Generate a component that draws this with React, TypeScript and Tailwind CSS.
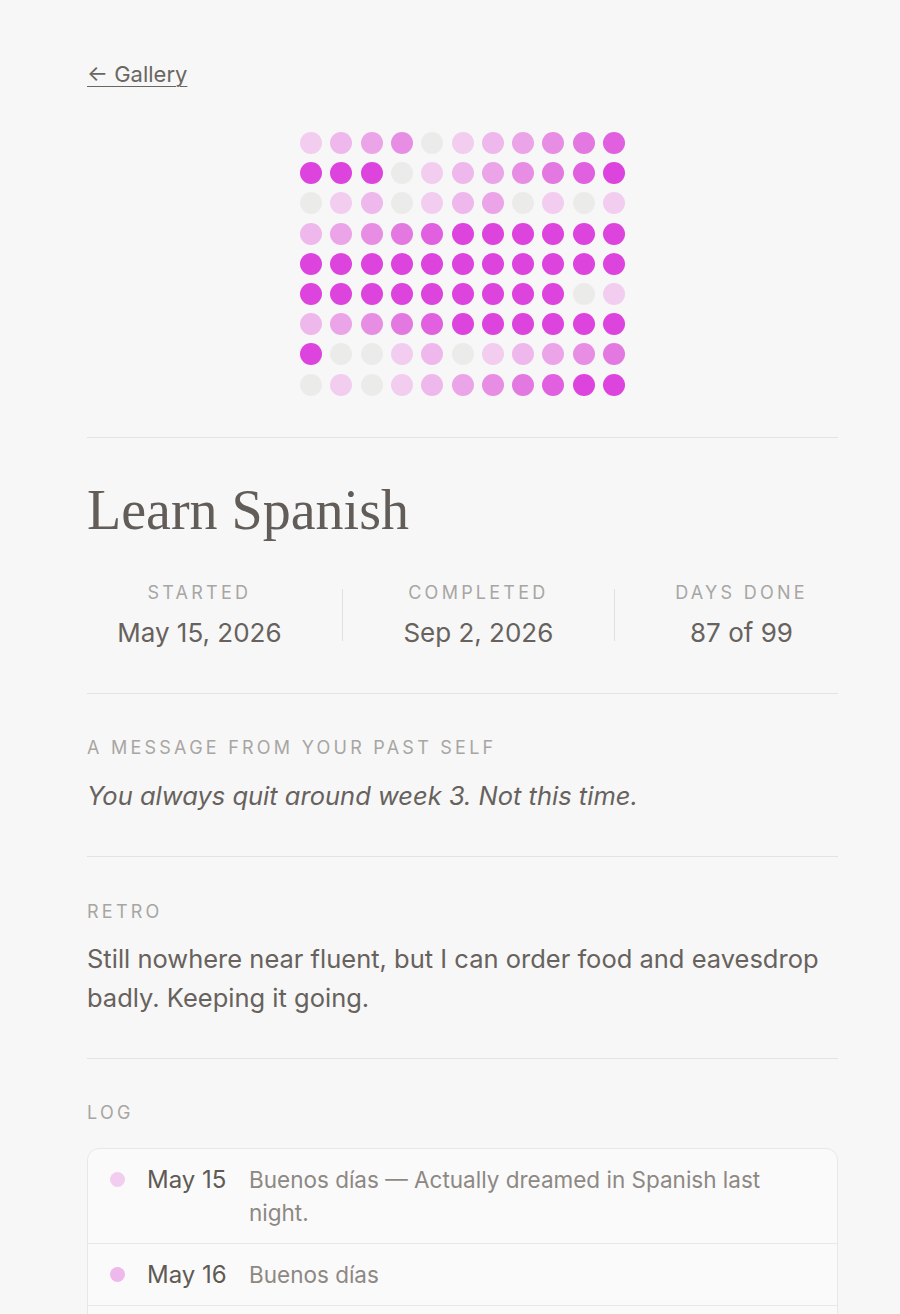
import React from "react"

// 0 = missed day, 1..7 = streak intensity
const GRID: number[][] = [
  [1, 2, 3, 4, 0, 1, 2, 3, 4, 5, 6],
  [7, 7, 7, 0, 1, 2, 3, 4, 5, 6, 7],
  [0, 1, 2, 0, 1, 2, 3, 0, 1, 0, 1],
  [2, 3, 4, 5, 6, 7, 7, 7, 7, 7, 7],
  [7, 7, 7, 7, 7, 7, 7, 7, 7, 7, 7],
  [7, 7, 7, 7, 7, 7, 7, 7, 7, 0, 1],
  [2, 3, 4, 5, 6, 7, 7, 7, 7, 7, 7],
  [7, 0, 0, 1, 2, 0, 1, 2, 3, 4, 5],
  [0, 1, 0, 1, 2, 3, 4, 5, 6, 7, 7],
]

const LEVEL_BG: Record<number, string> = {
  0: "bg-[#ebebe9]",
  1: "bg-[#f2cdf0]",
  2: "bg-[#efb8ec]",
  3: "bg-[#eba4e8]",
  4: "bg-[#e78ee4]",
  5: "bg-[#e378e1]",
  6: "bg-[#e060df]",
  7: "bg-[#dd44dd]",
}

const LOG = [
  { date: "May 15", text: "Buenos días — Actually dreamed in Spanish last night.", dot: "bg-[#f2cdf0]" },
  { date: "May 16", text: "Buenos días", dot: "bg-[#efb8ec]" },
  { date: "May 17", text: "Buenos días", dot: "bg-[#eba4e8]" },
]

const sans = "font-['Inter','Liberation_Sans',sans-serif]"

function Label({ children }: { children: React.ReactNode }) {
  return (
    <div className="text-[18px] leading-[22px] tracking-[0.18em] uppercase text-[#a8a6a3]">
      {children}
    </div>
  )
}

function Stat({ label, value }: { label: string; value: string }) {
  return (
    <div className="flex flex-col items-center">
      <Label>{label}</Label>
      <div className="mt-[13px] text-[26px] leading-[32px] text-[#67625d]">{value}</div>
    </div>
  )
}

export default function App() {
  return (
    <div className={`min-h-screen bg-[#f7f7f7] ${sans}`}>
      <div className="ml-[87px] w-[751px] pt-[60px] pb-10">
        <a href="#" className="text-[22px] leading-[28px] text-[#6b6661] underline underline-offset-4 decoration-1">
          ← Gallery
        </a>

        {/* progress grid */}
        <div className="mt-[44px] flex justify-center">
          <div className="grid grid-cols-11 gap-x-[8.3px] gap-y-[8.2px]">
            {GRID.flat().map((lvl, i) => (
              <div key={i} className={`h-[22px] w-[22px] rounded-full ${LEVEL_BG[lvl]}`} />
            ))}
          </div>
        </div>

        <hr className="mt-[41px] border-t border-[#e3e3e1]" />

        <h1 className="mt-[40px] font-['Liberation_Serif','DejaVu_Serif',serif] text-[56px] leading-[64px] text-[#625d58]">
          Learn Spanish
        </h1>

        <div className="mt-[40px] flex items-center justify-around">
          <Stat label="Started" value="May 15, 2026" />
          <div className="h-[52px] w-px bg-[#e3e1de]" />
          <Stat label="Completed" value="Sep 2, 2026" />
          <div className="h-[52px] w-px bg-[#e3e1de]" />
          <Stat label="Days done" value="87 of 99" />
        </div>

        <hr className="mt-[44px] border-t border-[#e3e3e1]" />

        <div className="mt-[43px]">
          <Label>A message from your past self</Label>
          <p className="mt-[20px] text-[25.5px] leading-[34px] italic text-[#67625d]">
            You always quit around week 3. Not this time.
          </p>
        </div>

        <hr className="mt-[43px] border-t border-[#e3e3e1]" />

        <div className="mt-[44px]">
          <Label>Retro</Label>
          <p className="mt-[16px] text-[25.5px] leading-[39px] text-[#67625d]">
            Still nowhere near fluent, but I can order food and eavesdrop badly. Keeping it going.
          </p>
        </div>

        <hr className="mt-[41px] border-t border-[#e3e3e1]" />

        <div className="mt-[43px]">
          <Label>Log</Label>
          <div className="mt-[24px] rounded-xl border border-[#e8e8e6] bg-[#fafafa]">
            {LOG.map((row, i) => (
              <div
                key={row.date}
                className={`flex items-start gap-[22px] px-[22px] py-[14px] ${i > 0 ? "border-t border-[#e8e8e6]" : ""}`}
              >
                <div className={`mt-[9px] h-[15px] w-[15px] shrink-0 rounded-full ${row.dot}`} />
                <div className="w-[80px] shrink-0 text-[24px] leading-[33px] text-[#5f5a55]">{row.date}</div>
                <div className="text-[22.5px] leading-[33px] text-[#8d8883]">{row.text}</div>
              </div>
            ))}
          </div>
        </div>
      </div>
    </div>
  )
}
